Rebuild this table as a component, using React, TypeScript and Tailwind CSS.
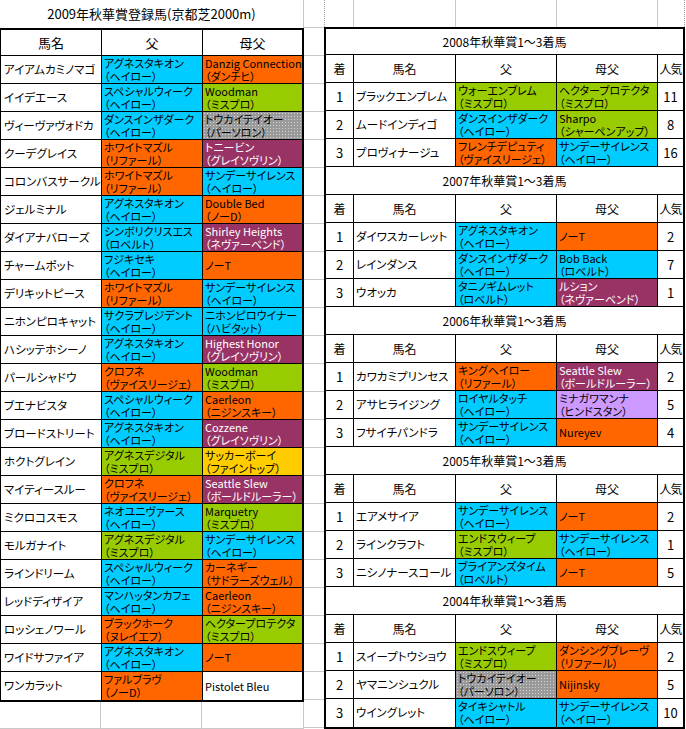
import React from "react";

type Color = "c" | "o" | "g" | "p" | "y" | "l" | "x" | "w";

const colors: Record<Color, string> = {
  c: "bg-[#00ccff]",
  o: "bg-[#ff6600]",
  g: "bg-[#99cc00]",
  p: "bg-[#993366] text-white",
  y: "bg-[#ffcc00]",
  l: "bg-[#cc99ff]",
  x: "bg-[#9a9a9a] bg-[radial-gradient(circle,#d4d4d4_0.7px,transparent_0.9px)] bg-[length:3px_3px]",
  w: "bg-white",
};

// [name, sire, sire line, color, damsire, damsire line, color]
type Horse = [string, string, string, Color, string, string, Color];

const entries: Horse[] = [
  ["アイアムカミノマゴ", "アグネスタキオン", "（ヘイロー）", "c", "Danzig Connection", "（ダンチヒ）", "o"],
  ["イイデエース", "スペシャルウィーク", "（ヘイロー）", "c", "Woodman", "（ミスプロ）", "g"],
  ["ヴィーヴァヴォドカ", "ダンスインザダーク", "（ヘイロー）", "c", "トウカイテイオー", "（パーソロン）", "x"],
  ["クーデグレイス", "ホワイトマズル", "（リファール）", "o", "トニービン", "（グレイソヴリン）", "p"],
  ["コロンバスサークル", "ホワイトマズル", "（リファール）", "o", "サンデーサイレンス", "（ヘイロー）", "c"],
  ["ジェルミナル", "アグネスタキオン", "（ヘイロー）", "c", "Double Bed", "（ノーD）", "o"],
  ["ダイアナバローズ", "シンボリクリスエス", "（ロベルト）", "c", "Shirley Heights", "（ネヴァーベンド）", "p"],
  ["チャームポット", "フジキセキ", "（ヘイロー）", "c", "ノーT", "", "o"],
  ["デリキットピース", "ホワイトマズル", "（リファール）", "o", "サンデーサイレンス", "（ヘイロー）", "c"],
  ["ニホンピロキャット", "サクラプレジデント", "（ヘイロー）", "c", "ニホンピロウイナー", "（ハビタット）", "c"],
  ["ハシッテホシーノ", "アグネスタキオン", "（ヘイロー）", "c", "Highest Honor", "（グレイソヴリン）", "p"],
  ["パールシャドウ", "クロフネ", "（ヴァイスリージェ）", "o", "Woodman", "（ミスプロ）", "g"],
  ["ブエナビスタ", "スペシャルウィーク", "（ヘイロー）", "c", "Caerleon", "（ニジンスキー）", "o"],
  ["ブロードストリート", "アグネスタキオン", "（ヘイロー）", "c", "Cozzene", "（グレイソヴリン）", "p"],
  ["ホクトグレイン", "アグネスデジタル", "（ミスプロ）", "g", "サッカーボーイ", "（ファイントップ）", "y"],
  ["マイティースルー", "クロフネ", "（ヴァイスリージェ）", "o", "Seattle Slew", "（ボールドルーラー）", "p"],
  ["ミクロコスモス", "ネオユニヴァース", "（ヘイロー）", "c", "Marquetry", "（ミスプロ）", "g"],
  ["モルガナイト", "アグネスデジタル", "（ミスプロ）", "g", "サンデーサイレンス", "（ヘイロー）", "c"],
  ["ラインドリーム", "スペシャルウィーク", "（ヘイロー）", "c", "カーネギー", "（サドラーズウェル）", "o"],
  ["レッドディザイア", "マンハッタンカフェ", "（ヘイロー）", "c", "Caerleon", "（ニジンスキー）", "o"],
  ["ロッシェノワール", "ブラックホーク", "（ヌレイエフ）", "o", "ヘクタープロテクタ", "（ミスプロ）", "g"],
  ["ワイドサファイア", "アグネスタキオン", "（ヘイロー）", "c", "ノーT", "", "o"],
  ["ワンカラット", "ファルブラヴ", "（ノーD）", "o", "Pistolet Bleu", "", "w"],
];

type Placed = [string, string, string, string, Color, string, string, Color, string];

const results: { year: string; rows: Placed[] }[] = [
  {
    year: "2008",
    rows: [
      ["1", "ブラックエンブレム", "ウォーエンブレム", "（ミスプロ）", "g", "ヘクタープロテクタ", "（ミスプロ）", "g", "11"],
      ["2", "ムードインディゴ", "ダンスインザダーク", "（ヘイロー）", "c", "Sharpo", "（シャーペンアップ）", "g", "8"],
      ["3", "プロヴィナージュ", "フレンチデピュティ", "（ヴァイスリージェ）", "o", "サンデーサイレンス", "（ヘイロー）", "c", "16"],
    ],
  },
  {
    year: "2007",
    rows: [
      ["1", "ダイワスカーレット", "アグネスタキオン", "（ヘイロー）", "c", "ノーT", "", "o", "2"],
      ["2", "レインダンス", "ダンスインザダーク", "（ヘイロー）", "c", "Bob Back", "（ロベルト）", "c", "7"],
      ["3", "ウオッカ", "タニノギムレット", "（ロベルト）", "c", "ルション", "（ネヴァーベンド）", "p", "1"],
    ],
  },
  {
    year: "2006",
    rows: [
      ["1", "カワカミプリンセス", "キングヘイロー", "（リファール）", "o", "Seattle Slew", "（ボールドルーラー）", "p", "2"],
      ["2", "アサヒライジング", "ロイヤルタッチ", "（ヘイロー）", "c", "ミナガワマンナ", "（ヒンドスタン）", "l", "5"],
      ["3", "フサイチパンドラ", "サンデーサイレンス", "（ヘイロー）", "c", "Nureyev", "", "o", "4"],
    ],
  },
  {
    year: "2005",
    rows: [
      ["1", "エアメサイア", "サンデーサイレンス", "（ヘイロー）", "c", "ノーT", "", "o", "2"],
      ["2", "ラインクラフト", "エンドスウィープ", "（ミスプロ）", "g", "サンデーサイレンス", "（ヘイロー）", "c", "1"],
      ["3", "ニシノナースコール", "ブライアンズタイム", "（ロベルト）", "c", "ノーT", "", "o", "5"],
    ],
  },
  {
    year: "2004",
    rows: [
      ["1", "スイープトウショウ", "エンドスウィープ", "（ミスプロ）", "g", "ダンシングブレーヴ", "（リファール）", "o", "2"],
      ["2", "ヤマニンシュクル", "トウカイテイオー", "（パーソロン）", "x", "Nijinsky", "", "o", "5"],
      ["3", "ウイングレット", "タイキシャトル", "（ヘイロー）", "c", "サンデーサイレンス", "（ヘイロー）", "c", "10"],
    ],
  },
];

const Pedigree = ({ top, bottom, color, last }: { top: string; bottom: string; color: Color; last?: boolean }) => (
  <div
    className={`flex flex-col justify-center pl-[2px] text-[11px] leading-[13px] overflow-hidden whitespace-nowrap ${
      last ? "" : "border-r border-black"
    } ${colors[color]}`}
  >
    <span className="block h-[13px]">{top}</span>
    {bottom && <span className="block h-[13px]">{bottom}</span>}
  </div>
);

const LeftTable = () => (
  <div className="w-[304px] shrink-0 flex flex-col">
    <div className="h-[28px] flex items-center justify-center text-[13px] border-r border-[#c8c8c8]">
      2009年秋華賞登録馬(京都芝2000m)
    </div>
    <div className="border-l border-t-2 border-r-2 border-b-2 border-black divide-y divide-black">
      <div className="grid grid-cols-[101px_101px_99px] h-[26px] text-[13px]">
        <div className="flex items-center justify-center border-r border-black">馬名</div>
        <div className="flex items-center justify-center border-r border-black">父</div>
        <div className="flex items-center justify-center">母父</div>
      </div>
      {entries.map((h, i) => (
        <div key={i} className="grid grid-cols-[101px_101px_99px] h-[28px]">
          <div className="flex items-center pl-[3px] text-[11.5px] border-r border-black whitespace-nowrap overflow-hidden">
            {h[0]}
          </div>
          <Pedigree top={h[1]} bottom={h[2]} color={h[3]} />
          <Pedigree top={h[4]} bottom={h[5]} color={h[6]} last />
        </div>
      ))}
    </div>
    <div className="grid grid-cols-[101px_101px_102px] h-[27px]">
      <div className="border-r border-b border-[#c8c8c8]" />
      <div className="border-r border-b border-[#c8c8c8]" />
      <div className="border-r border-b border-[#c8c8c8]" />
    </div>
  </div>
);

const Gutter = () => (
  <div className="w-[20px] shrink-0 flex flex-col">
    {Array.from({ length: 26 }, (_, i) => (
      <div key={i} className="h-[28px] shrink-0 border-b border-[#c8c8c8]" />
    ))}
  </div>
);

const RightTable = () => (
  <div className="w-[361px] shrink-0 flex flex-col">
    <div className="grid grid-cols-[30px_102px_101px_101px_27px] h-[28px]">
      <div className="border-l border-dotted border-[#a0a0a0] relative">
        <div className="absolute right-0 top-0 bottom-0 border-r border-solid border-[#c8c8c8]" />
      </div>
      <div className="border-r border-[#c8c8c8]" />
      <div className="border-r border-[#c8c8c8]" />
      <div className="border-r border-[#c8c8c8]" />
      <div className="border-r border-dotted border-[#a0a0a0]" />
    </div>
    <div className="border-2 border-black divide-y divide-black">
      {results.map((s, si) => (
        <React.Fragment key={s.year}>
          <div className={`flex items-center justify-center ${si === 0 ? "h-[26px]" : "h-[28px]"}`}>
            {s.year}年秋華賞1～3着馬
          </div>
          <div className="grid grid-cols-[28px_102px_101px_101px_25px] h-[28px] text-[12px]">
            <div className="flex items-center justify-center border-r border-black">着</div>
            <div className="flex items-center justify-center border-r border-black">馬名</div>
            <div className="flex items-center justify-center border-r border-black">父</div>
            <div className="flex items-center justify-center border-r border-black">母父</div>
            <div className="flex items-center justify-center whitespace-nowrap tracking-[-1px]">人気</div>
          </div>
          {s.rows.map((r) => (
            <div key={r[0]} className="grid grid-cols-[28px_102px_101px_101px_25px] h-[28px]">
              <div className="flex items-center justify-center border-r border-black text-[13px]">{r[0]}</div>
              <div className="flex items-center pl-[2px] text-[11.5px] border-r border-black whitespace-nowrap overflow-hidden">
                {r[1]}
              </div>
              <Pedigree top={r[2]} bottom={r[3]} color={r[4]} />
              <Pedigree top={r[5]} bottom={r[6]} color={r[7]} />
              <div className="flex items-center justify-center text-[13px]">{r[8]}</div>
            </div>
          ))}
        </React.Fragment>
      ))}
    </div>
  </div>
);

export default function App() {
  return (
    <div className="w-[686px] h-[729px] overflow-hidden bg-white text-black text-[12px] flex [font-family:'Noto_Sans_CJK_JP',sans-serif] [font-feature-settings:'palt']">
      <LeftTable />
      <Gutter />
      <RightTable />
    </div>
  );
}
